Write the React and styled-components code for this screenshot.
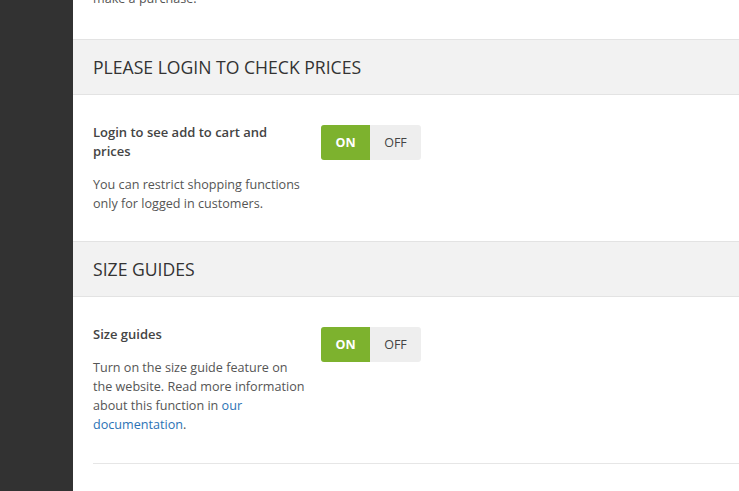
import React from "react";
import styled, { createGlobalStyle } from "styled-components";

const Global = createGlobalStyle`
  html, body { margin: 0; padding: 0; background: #ffffff; }
  body { font-family: "Open Sans", "Noto Sans", Arial, sans-serif; overflow: hidden; }
  * { box-sizing: border-box; }
`;

const Page = styled.div`
  display: flex;
  width: 739px;
  height: 491px;
  overflow: hidden;
`;

const Sidebar = styled.aside`
  width: 73px;
  flex: none;
  background: #323232;
`;

const Main = styled.main`
  flex: 1;
  background: #fff;
  margin-top: -11px;
`;

const Lead = styled.div`
  padding: 0 20px 31px;
`;

const SectionHeader = styled.h2`
  margin: 0;
  height: 56px;
  display: flex;
  align-items: center;
  padding: 0 20px;
  background: #f2f2f2;
  border-top: 1px solid #e3e3e3;
  border-bottom: 1px solid #e3e3e3;
  font-size: 17.6px;
  font-weight: 400;
  color: #333;
`;

const Row = styled.div`
  display: flex;
  align-items: flex-start;
  gap: 16px;
  margin-left: 20px;
  padding: ${(p) => p.$pad || "28px 0 28px"};
  border-bottom: ${(p) => (p.$divider ? "1px solid #e6e6e6" : "none")};
`;

const Info = styled.div`
  width: 212px;
  flex: none;
`;

const Label = styled.div`
  font-size: 13px;
  line-height: 19px;
  font-weight: 600;
  color: #444;
  margin-bottom: 14px;
`;

const Desc = styled.p`
  margin: 0;
  font-size: 12.6px;
  line-height: 19px;
  color: #555;
  a { color: #2b72b5; text-decoration: none; }
`;

const Toggle = styled.div`
  display: flex;
  margin-top: 2px;
  height: 35px;
  border-radius: 3px;
  overflow: hidden;
  background: #eeeeee;
`;

const ToggleOption = styled.span`
  display: flex;
  align-items: center;
  justify-content: center;
  width: ${(p) => p.$w}px;
  font-size: 12.5px;
  font-weight: ${(p) => (p.$active ? 700 : 400)};
  color: ${(p) => (p.$active ? "#fff" : "#444")};
  background: ${(p) => (p.$active ? "#7db22e" : "transparent")};
`;

const Switch = () => (
  <Toggle>
    <ToggleOption $w={49} $active>ON</ToggleOption>
    <ToggleOption $w={51}>OFF</ToggleOption>
  </Toggle>
);

export default function App() {
  return (
    <>
      <Global />
      <Page>
        <Sidebar />
        <Main>
          <Lead>
            <Desc>make a purchase.</Desc>
          </Lead>
          <SectionHeader>PLEASE LOGIN TO CHECK PRICES</SectionHeader>
          <Row $pad="28px 0 28px">
            <Info>
              <Label>Login to see add to cart and prices</Label>
              <Desc>You can restrict shopping functions only for logged in customers.</Desc>
            </Info>
            <Switch />
          </Row>
          <SectionHeader>SIZE GUIDES</SectionHeader>
          <Row $pad="28px 0 29px" $divider>
            <Info>
              <Label>Size guides</Label>
              <Desc>
                Turn on the size guide feature on the website. Read more information about this function in{" "}
                <a href="#">our documentation</a>.
              </Desc>
            </Info>
            <Switch />
          </Row>
        </Main>
      </Page>
    </>
  );
}
